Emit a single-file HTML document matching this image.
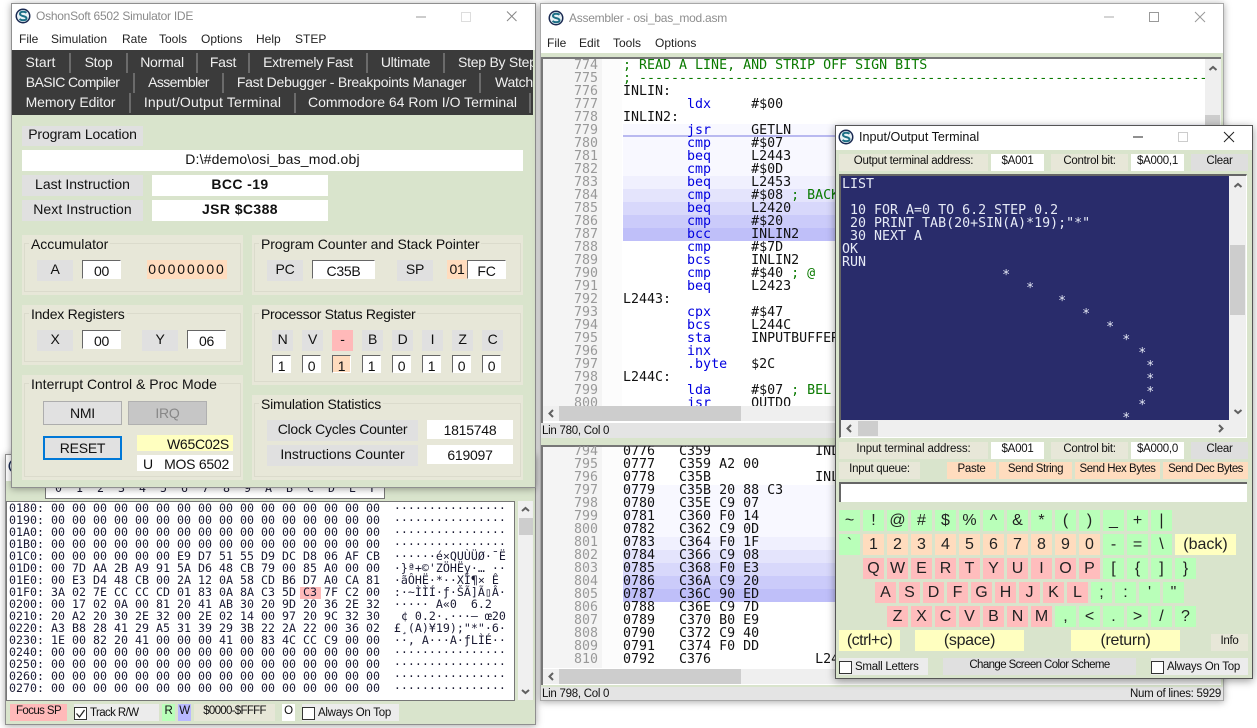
<!DOCTYPE html>
<html><head><meta charset="utf-8"><title>OshonSoft 6502 Simulator IDE</title>
<style>
html,body{margin:0;padding:0;background:#fff;width:1257px;height:728px;overflow:hidden}
body{position:relative;font-family:"Liberation Sans",sans-serif;font-size:14px;letter-spacing:-.25px;color:#111}
div,pre,svg{position:absolute;box-sizing:border-box;margin:0}
.b{display:flex;align-items:center;justify-content:center;white-space:pre;overflow:hidden;padding-bottom:3px}
.t{white-space:pre;line-height:16px}
.w{background:#d9e4cc;box-shadow:0 1px 7px rgba(0,0,0,.35);border:1px solid #8f8f8f}
.g{background:#e0e0e0}.f{background:#fff}.p{background:#ffdcbe}.k{background:#e7e7d8}
.gr{background:#e7e7d8}
.gr i{position:absolute;left:2px;right:2px;top:8px;bottom:3px;border:1px solid #dbdbcc}
.gr b{position:absolute;left:7px;top:0;font-weight:400;line-height:18px;background:#e7e7d8;padding:0 2px;white-space:pre}
.i{background:#fff;border-top:1px solid #666;border-left:1px solid #666;border-right:1px solid #fff;border-bottom:1px solid #fff;padding-top:3px;padding-bottom:0}
.bar{background:#3b3b3b}
.c{top:0;height:20px;color:#f0f0f0;border-right:2px solid #6b6b6b;display:flex;align-items:center;justify-content:center;white-space:pre;overflow:hidden;padding-bottom:2px}
.m{font-family:"DejaVu Sans Mono","Liberation Mono",monospace;font-size:13.3px;line-height:13px;white-space:pre;letter-spacing:0}
.h{font-family:"DejaVu Sans Mono","Liberation Mono",monospace;font-size:11.63px;line-height:12px;white-space:pre;color:#1a1a33;letter-spacing:0}
.n{text-align:right;color:#999}
.in{color:#0000e0}.cm{color:#0a7a00}
.key{width:21px;height:21px;font-size:16px;letter-spacing:0;display:flex;align-items:center;justify-content:center;white-space:pre;color:#222}
.gk{background:#b9ffb9}.pk{background:#ffbdbd}.ok{background:#ffdcbe}.yk{background:#ffffc0}
.s12{font-size:11.5px;letter-spacing:-.27px}
.b.s12{padding-bottom:3px}
.cb{background:#fff;border:1px solid #333;width:13px;height:13px}
.menu{font-size:12px;white-space:pre;color:#222;line-height:14px;letter-spacing:0}
.bold{font-weight:700;letter-spacing:.4px;font-size:14px}
</style></head><body>

<!-- Memory editor window (behind) -->
<div class="w" style="left:5px;top:454px;width:531px;height:271px"></div>
<div style="left:6px;top:455px;width:529px;height:26px;background:#fff"></div>
<svg style="left:8px;top:458px" width="16" height="16" viewBox="0 0 16 16"><circle cx="8" cy="8" r="7.5" fill="#1a2a52"/><circle cx="8" cy="8" r="6" fill="#e8f2f6"/></svg>
<div style="left:45px;top:480px;width:340px;height:19px;background:#fff;border:1px solid #777"></div>
<pre class="h" style="left:55px;top:482px">0  1  2  3  4  5  6  7  8  9  A  B  C  D  E  F</pre>
<div style="left:6px;top:501px;width:509px;height:200px;background:#fff;border:1px solid #777"></div>
<div style="left:299.6px;top:587px;width:21.4px;height:12px;background:#ffb9b9"></div>
<pre class="h" style="left:9px;top:502px">0180: 00 00 00 00 00 00 00 00 00 00 00 00 00 00 00 00  ················
0190: 00 00 00 00 00 00 00 00 00 00 00 00 00 00 00 00  ················
01A0: 00 00 00 00 00 00 00 00 00 00 00 00 00 00 00 00  ················
01B0: 00 00 00 00 00 00 00 00 00 00 00 00 00 00 00 00  ················
01C0: 00 00 00 00 00 00 E9 D7 51 55 D9 DC D8 06 AF CB  ······é×QUÙÜØ·¯Ë
01D0: 00 7D AA 2B A9 91 5A D6 48 CB 79 00 85 A0 00 00  ·}ª+©'ZÖHËy·… ··
01E0: 00 E3 D4 48 CB 00 2A 12 0A 58 CD B6 D7 A0 CA 81  ·ãÔHË·*··XÍ¶× Ê 
01F0: 3A 02 7E CC CC CD 01 83 0A 8A C3 5D C3 7F C2 00  :·~ÌÌÍ·ƒ·ŠÃ]Ã▯Â·
0200: 00 17 02 0A 00 81 20 41 AB 30 20 9D 20 36 2E 32  ····· A«0  6.2
0210: 20 A2 20 30 2E 32 00 2E 02 14 00 97 20 9C 32 30   ¢ 0.2·.···— œ20
0220: A3 B8 28 41 29 A5 31 39 29 3B 22 2A 22 00 36 02  £¸(A)¥19);"*"·6·
0230: 1E 00 82 20 41 00 00 00 41 00 83 4C CC C9 00 00  ··‚ A···A·ƒLÌÉ··
0240: 00 00 00 00 00 00 00 00 00 00 00 00 00 00 00 00  ················
0250: 00 00 00 00 00 00 00 00 00 00 00 00 00 00 00 00  ················
0260: 00 00 00 00 00 00 00 00 00 00 00 00 00 00 00 00  ················
0270: 00 00 00 00 00 00 00 00 00 00 00 00 00 00 00 00  ················</pre>
<div style="left:518px;top:501px;width:15px;height:199px;background:#f0f0f0"></div>
<div style="left:519px;top:518px;width:14px;height:17px;background:#cdcdcd"></div>
<svg style="left:518px;top:501px" width="15" height="199"><polyline points="4,10 7.5,7 11,10" fill="none" stroke="#606060" stroke-width="2"/><polyline points="4,189 7.5,192 11,189" fill="none" stroke="#606060" stroke-width="2"/></svg>
<div class="b s12" style="left:10px;top:704px;width:57px;height:17px;background:#ffb9b9;letter-spacing:-.6px">Focus SP</div>
<div class="s12" style="left:74px;top:704px;width:85px;height:17px;background:#ececec"></div>
<div class="cb" style="left:74px;top:707px"></div>
<svg style="left:74px;top:707px" width="13" height="13"><polyline points="2.5,6.5 5.5,10 10.5,3" fill="none" stroke="#222" stroke-width="1.3"/></svg>
<div class="s12 t" style="left:90px;top:705px;letter-spacing:-.6px">Track R/W</div>
<div class="b s12" style="left:162px;top:704px;width:13px;height:17px;background:#b9ffb9">R</div>
<div class="b s12" style="left:178px;top:704px;width:13px;height:17px;background:#b9b9ff">W</div>
<div class="b s12 k" style="left:194px;top:704px;width:81px;height:17px;letter-spacing:-.7px">$0000-$FFFF</div>
<div class="b s12 f" style="left:282px;top:704px;width:13px;height:17px">O</div>
<div style="left:302px;top:704px;width:97px;height:17px;background:#ececec"></div>
<div class="cb" style="left:302px;top:707px"></div>
<div class="s12 t" style="left:318px;top:705px">Always On Top</div>

<!-- Main simulator window -->
<div class="w" style="left:11px;top:3px;width:525px;height:485px"></div>
<div style="left:12px;top:4px;width:523px;height:46px;background:#fff"></div>
<svg style="left:15px;top:8px" width="16" height="16" viewBox="0 0 16 16"><circle cx="8" cy="8" r="7.5" fill="#1a2a52"/><circle cx="8" cy="8" r="6" fill="#e8f2f6"/><path d="M11.5 4.8C9.5 3 5 3.5 5 6c0 2.6 6.5 1.6 6.5 4.2 0 2.4-4.8 2.6-7 .8" fill="none" stroke="#1c6f86" stroke-width="2"/></svg>
<div class="t" style="left:36px;top:8px;font-size:12px;color:#8a8a8a">OshonSoft 6502 Simulator IDE</div>
<svg style="left:410px;top:8px" width="115" height="18"><line x1="6" y1="9" x2="16" y2="9" stroke="#999"/><rect x="51.5" y="4.5" width="9" height="9" fill="none" stroke="#ddd"/><path d="M97 3.5l9.5 9.5M106.500 3.500l-9.500 9.500" stroke="#888" fill="none"/></svg>
<div class="menu" style="left:19px;top:32px">File</div>
<div class="menu" style="left:51px;top:32px">Simulation</div>
<div class="menu" style="left:122px;top:32px">Rate</div>
<div class="menu" style="left:159px;top:32px">Tools</div>
<div class="menu" style="left:201px;top:32px">Options</div>
<div class="menu" style="left:256px;top:32px">Help</div>
<div class="menu" style="left:295px;top:32px">STEP</div>
<div class="bar" style="left:12px;top:50px;width:521px;height:65px"></div>
<div style="left:12px;top:53px;width:521px;height:20px;overflow:hidden">
<div class="c" style="left:0;width:59px;letter-spacing:.1px">Start</div><div class="c" style="left:59px;width:57px">Stop</div><div class="c" style="left:116px;width:70px">Normal</div><div class="c" style="left:186px;width:52px">Fast</div><div class="c" style="left:238px;width:118px">Extremely Fast</div><div class="c" style="left:356px;width:77px">Ultimate</div><div class="c" style="left:433px;width:100px;border:0;justify-content:flex-start;padding-left:13px">Step By Step</div>
</div>
<div style="left:12px;top:73px;width:521px;height:20px;overflow:hidden">
<div class="c" style="left:0;width:123px;letter-spacing:-.6px">BASIC Compiler</div><div class="c" style="left:123px;width:89px;letter-spacing:-.6px">Assembler</div><div class="c" style="left:212px;width:257px">Fast Debugger - Breakpoints Manager</div><div class="c" style="left:469px;width:60px;border:0;justify-content:flex-start;padding-left:14px">Watch</div>
</div>
<div style="left:12px;top:93px;width:521px;height:20px;overflow:hidden">
<div class="c" style="left:0;width:119px;letter-spacing:-.1px">Memory Editor</div><div class="c" style="left:119px;width:165px;letter-spacing:.18px">Input/Output Terminal</div><div class="c" style="left:284px;width:235px;letter-spacing:0">Commodore 64 Rom I/O Terminal</div>
</div>

<div class="b g" style="left:22px;top:126px;width:121px;height:20px;padding-bottom:4px;letter-spacing:-.12px">Program Location</div>
<div class="b f" style="left:22px;top:150px;width:501px;height:21px;letter-spacing:.17px">D:\#demo\osi_bas_mod.obj</div>
<div class="b g" style="left:22px;top:175px;width:121px;height:21px;letter-spacing:0">Last Instruction</div>
<div class="b f bold" style="left:152px;top:175px;width:176px;height:21px">BCC -19</div>
<div class="b g" style="left:22px;top:200px;width:121px;height:21px;letter-spacing:.08px">Next Instruction</div>
<div class="b f bold" style="left:152px;top:200px;width:176px;height:21px">JSR $C388</div>

<!-- Accumulator -->
<div class="gr" style="left:22px;top:235px;width:221px;height:60px"><i></i><b style="letter-spacing:-.05px">Accumulator</b></div>
<div class="b g" style="left:37px;top:260px;width:36px;height:21px">A</div>
<div class="b i" style="left:82px;top:260px;width:39px;height:19px">00</div>
<div class="b p" style="left:147px;top:260px;width:80px;height:19px;letter-spacing:1.9px;padding-bottom:1px">00000000</div>
<!-- PC SP -->
<div class="gr" style="left:252px;top:235px;width:271px;height:60px"><i></i><b style="letter-spacing:-.1px">Program Counter and Stack Pointer</b></div>
<div class="b g" style="left:267px;top:260px;width:36px;height:21px">PC</div>
<div class="b i" style="left:312px;top:260px;width:63px;height:19px">C35B</div>
<div class="b g" style="left:397px;top:260px;width:36px;height:21px">SP</div>
<div class="b p" style="left:447px;top:260px;width:20px;height:19px;padding-bottom:1px">01</div>
<div class="b i" style="left:467px;top:260px;width:39px;height:19px">FC</div>
<!-- Index -->
<div class="gr" style="left:22px;top:305px;width:221px;height:60px"><i></i><b>Index Registers</b></div>
<div class="b g" style="left:37px;top:330px;width:36px;height:21px">X</div>
<div class="b i" style="left:82px;top:330px;width:39px;height:19px">00</div>
<div class="b g" style="left:142px;top:330px;width:36px;height:21px">Y</div>
<div class="b i" style="left:187px;top:330px;width:39px;height:19px">06</div>
<!-- PSR -->
<div class="gr" style="left:252px;top:305px;width:271px;height:80px"><i></i><b style="letter-spacing:-.33px">Processor Status Register</b></div>
<div class="b g" style="left:272px;top:330px;width:21px;height:21px">N</div>
<div class="b g" style="left:302px;top:330px;width:21px;height:21px">V</div>
<div class="b" style="left:332px;top:330px;width:21px;height:21px;background:#ffb9b9">-</div>
<div class="b g" style="left:362px;top:330px;width:21px;height:21px">B</div>
<div class="b g" style="left:392px;top:330px;width:21px;height:21px">D</div>
<div class="b g" style="left:422px;top:330px;width:21px;height:21px">I</div>
<div class="b g" style="left:452px;top:330px;width:21px;height:21px">Z</div>
<div class="b g" style="left:482px;top:330px;width:21px;height:21px">C</div>
<div class="b i" style="left:272px;top:355px;width:19px;height:18px;padding-top:4px">1</div>
<div class="b i" style="left:302px;top:355px;width:19px;height:18px;padding-top:4px">0</div>
<div class="b i" style="left:332px;top:355px;width:19px;height:18px;padding-top:4px;background:#ffdcbe">1</div>
<div class="b i" style="left:362px;top:355px;width:19px;height:18px;padding-top:4px">1</div>
<div class="b i" style="left:392px;top:355px;width:19px;height:18px;padding-top:4px">0</div>
<div class="b i" style="left:422px;top:355px;width:19px;height:18px;padding-top:4px">1</div>
<div class="b i" style="left:452px;top:355px;width:19px;height:18px;padding-top:4px">0</div>
<div class="b i" style="left:482px;top:355px;width:19px;height:18px;padding-top:4px">0</div>
<!-- Interrupt -->
<div class="gr" style="left:22px;top:375px;width:221px;height:105px"><i></i><b style="letter-spacing:0">Interrupt Control &amp; Proc Mode</b></div>
<div class="b" style="left:43px;top:401px;width:79px;height:24px;background:#e1e1e1;border:1px solid #adadad;padding:0">NMI</div>
<div class="b" style="left:128px;top:401px;width:79px;height:24px;background:#c6c6c6;border:1px solid #b0b0b0;color:#888;padding:0">IRQ</div>
<div class="b" style="left:43px;top:436px;width:79px;height:24px;background:#e1e1e1;border:2px solid #0078d7;padding:0">RESET</div>
<div class="b" style="left:137px;top:435px;width:96px;height:16px;background:#ffffc0;justify-content:flex-end;padding:2px 4px 0 0">W65C02S</div>
<div class="b f" style="left:137px;top:455px;width:96px;height:16px;justify-content:flex-end;padding:2px 4px 0 0"><span style="position:absolute;left:6px">U</span>MOS 6502</div>
<!-- Sim stats -->
<div class="gr" style="left:252px;top:395px;width:271px;height:85px"><i></i><b>Simulation Statistics</b></div>
<div class="b g" style="left:267px;top:420px;width:151px;height:21px">Clock Cycles Counter</div>
<div class="b f" style="left:427px;top:420px;width:86px;height:19px;padding:0">1815748</div>
<div class="b g" style="left:267px;top:445px;width:151px;height:21px;letter-spacing:-.05px">Instructions Counter</div>
<div class="b f" style="left:427px;top:445px;width:86px;height:19px;padding:0">619097</div>

<!-- Assembler window -->
<div class="w" style="left:540px;top:3px;width:684px;height:698px;background:#d9e4cc;border-color:#a8a8a8"></div>
<div style="left:541px;top:4px;width:682px;height:49px;background:#fff"></div>
<svg style="left:548px;top:10px" width="16" height="16" viewBox="0 0 16 16"><circle cx="8" cy="8" r="7.5" fill="#1a2a52"/><circle cx="8" cy="8" r="6" fill="#e8f2f6"/><path d="M11.5 4.8C9.500 3 5 3.500 5 6c0 2.600 6.500 1.600 6.500 4.200 0 2.400-4.800 2.600-7 .8" fill="none" stroke="#1c6f86" stroke-width="2"/></svg>
<div class="t" style="left:569px;top:10px;font-size:12px;color:#8e8e8e">Assembler - osi_bas_mod.asm</div>
<svg style="left:1100px;top:8px" width="115" height="18"><line x1="4" y1="9" x2="14" y2="9" stroke="#aaa"/><rect x="49.500" y="4.500" width="9" height="9" fill="none" stroke="#999"/><path d="M95 4l10 10M105 4l-10 10" stroke="#999" fill="none"/></svg>
<div class="menu" style="left:547px;top:36px">File</div>
<div class="menu" style="left:579px;top:36px">Edit</div>
<div class="menu" style="left:613px;top:36px">Tools</div>
<div class="menu" style="left:655px;top:36px">Options</div>

<!-- editor 1 -->
<div style="left:541px;top:57px;width:680px;height:366px;background:#fff;border-top:2px solid #777;border-left:2px solid #777;overflow:hidden"></div>
<div style="left:543px;top:59px;width:59px;height:347px;background:#f4f4f4"></div>
<div style="left:602px;top:59px;width:20px;height:347px;background:#fcfcfc"></div>
<div style="left:622.5px;top:124px;width:583px;height:13px;background:#f8f8ff;border-bottom:2px solid #b9b9f0"></div>
<div style="left:622.500px;top:137px;width:583px;height:39px;background:#f8f8ff"></div>
<div style="left:622.500px;top:176px;width:583px;height:13px;background:#f0f0fe"></div>
<div style="left:622.500px;top:189px;width:583px;height:13px;background:#e4e4fc"></div>
<div style="left:622.500px;top:202px;width:583px;height:13px;background:#d8d8fb"></div>
<div style="left:622.500px;top:215px;width:583px;height:13px;background:#cbcbfa"></div>
<div style="left:622.500px;top:228px;width:583px;height:13px;background:#bfbff9"></div>
<div style="left:543px;top:59px;width:662px;height:347px;overflow:hidden">
<pre class="m n" style="left:0;top:0;width:55px">774
775
776
777
778
779
780
781
782
783
784
785
786
787
788
789
790
791
792
793
794
795
796
797
798
799
800</pre>
<pre class="m" style="left:80px;top:0"><span class="cm">; READ A LINE, AND STRIP OFF SIGN BITS
; -----------------------------------------------------------------------</span>
INLIN:
        <span class="in">ldx</span>     #$00
INLIN2:
        <span class="in">jsr</span>     GETLN
        <span class="in">cmp</span>     #$07
        <span class="in">beq</span>     L2443
        <span class="in">cmp</span>     #$0D
        <span class="in">beq</span>     L2453
        <span class="in">cmp</span>     #$08 <span class="cm">; BACKSPACE</span>
        <span class="in">beq</span>     L2420
        <span class="in">cmp</span>     #$20
        <span class="in">bcc</span>     INLIN2
        <span class="in">cmp</span>     #$7D
        <span class="in">bcs</span>     INLIN2
        <span class="in">cmp</span>     #$40 <span class="cm">; @</span>
        <span class="in">beq</span>     L2423
L2443:
        <span class="in">cpx</span>     #$47
        <span class="in">bcs</span>     L244C
        <span class="in">sta</span>     INPUTBUFFER,X
        <span class="in">inx</span>
        <span class="in">.byte</span>   $2C
L244C:
        <span class="in">lda</span>     #$07 <span class="cm">; BEL</span>
        <span class="in">jsr</span>     OUTDO</pre>
</div>
<div style="left:1205px;top:59px;width:16px;height:347px;background:#efefef"></div>
<div style="left:1205px;top:115px;width:15px;height:60px;background:#cdcdcd"></div>
<svg style="left:1205px;top:59px" width="16" height="20"><polyline points="4.500,11 8,8 11.500,11" fill="none" stroke="#606060" stroke-width="2"/></svg>
<div style="left:543px;top:406px;width:678px;height:15px;background:#efefef"></div>
<div style="left:559px;top:406px;width:182px;height:15px;background:#cdcdcd"></div>
<svg style="left:543px;top:406px" width="16" height="15"><polyline points="10,4 6.500,7.500 10,11" fill="none" stroke="#606060" stroke-width="2"/></svg>
<div style="left:541px;top:423px;width:682px;height:15px;background:#e4e4e4"></div>
<div class="s12 t" style="left:542px;top:423px">Lin 780, Col 0</div>

<!-- editor 2 -->
<div style="left:541px;top:445px;width:680px;height:240px;background:#fff;border-top:2px solid #777;border-left:2px solid #777"></div>
<div style="left:543px;top:447px;width:59px;height:221px;background:#f4f4f4"></div>
<div style="left:602px;top:447px;width:20px;height:221px;background:#fcfcfc"></div>
<div style="left:622.500px;top:485px;width:598px;height:52px;background:#f8f8ff"></div>
<div style="left:622.500px;top:537px;width:598px;height:13px;background:#f0f0fe"></div>
<div style="left:622.500px;top:550px;width:598px;height:13px;background:#e4e4fc"></div>
<div style="left:622.500px;top:563px;width:598px;height:13px;background:#d8d8fb"></div>
<div style="left:622.500px;top:576px;width:598px;height:13px;background:#cbcbfa"></div>
<div style="left:622.500px;top:589px;width:598px;height:13px;background:#bfbff9"></div>
<div style="left:543px;top:446px;width:678px;height:222px;overflow:hidden">
<pre class="m n" style="left:0;top:-1px;width:55px">794
795
796
797
798
799
800
801
802
803
804
805
806
807
808
809
810</pre>
<pre class="m" style="left:80px;top:-1px">0776   C359             INLIN:
0777   C359 A2 00
0778   C35B             INLIN2:
0779   C35B 20 88 C3
0780   C35E C9 07
0781   C360 F0 14
0782   C362 C9 0D
0783   C364 F0 1F
0784   C366 C9 08
0785   C368 F0 E3
0786   C36A C9 20
0787   C36C 90 ED
0788   C36E C9 7D
0789   C370 B0 E9
0790   C372 C9 40
0791   C374 F0 DD
0792   C376             L2443:</pre>
</div>
<div style="left:543px;top:669px;width:678px;height:15px;background:#efefef"></div>
<div style="left:559px;top:669px;width:182px;height:15px;background:#cdcdcd"></div>
<svg style="left:543px;top:669px" width="16" height="15"><polyline points="10,4 6.500,7.500 10,11" fill="none" stroke="#606060" stroke-width="2"/></svg>
<div style="left:541px;top:687px;width:682px;height:13px;background:#e4e4e4"></div>
<div class="s12 t" style="left:542px;top:686px">Lin 798, Col 0</div>
<div class="s12 t" style="left:1130px;top:686px">Num of lines: 5929</div>

<!-- Terminal window -->
<div class="w" style="left:835px;top:125px;width:418px;height:554px;border-color:#555;box-shadow:0 2px 8px rgba(0,0,0,.4)"></div>
<div style="left:836px;top:126px;width:416px;height:24px;background:#fff"></div>
<svg style="left:838px;top:129px" width="16" height="16" viewBox="0 0 16 16"><circle cx="8" cy="8" r="7.500" fill="#1a2a52"/><circle cx="8" cy="8" r="6" fill="#e8f2f6"/><path d="M11.500 4.800C9.500 3 5 3.500 5 6c0 2.600 6.500 1.600 6.500 4.200 0 2.400-4.800 2.600-7 .8" fill="none" stroke="#1c6f86" stroke-width="2"/></svg>
<div class="t" style="left:859px;top:129px;font-size:12.600px;letter-spacing:0;color:#111">Input/Output Terminal</div>
<svg style="left:1130px;top:128px" width="110" height="18"><line x1="3" y1="9" x2="13" y2="9" stroke="#222"/><rect x="48.500" y="4.500" width="9" height="9" fill="none" stroke="#ccc"/><path d="M94 4l10 10M104 4l-10 10" stroke="#222" fill="none"/></svg>

<div class="b s12 k" style="left:839px;top:154px;width:149px;height:17px">Output terminal address:</div>
<div class="b s12 f" style="left:991px;top:154px;width:53px;height:17px">$A001</div>
<div class="b s12 k" style="left:1051px;top:154px;width:77px;height:17px">Control bit:</div>
<div class="b s12 f" style="left:1131px;top:154px;width:53px;height:17px">$A000,1</div>
<div class="b s12" style="left:1191px;top:154px;width:57px;height:17px;background:#dedede">Clear</div>

<div style="left:839px;top:174px;width:408px;height:264px;background:#efefef;border-top:2px solid #666;border-left:2px solid #666;border-right:1px solid #fff;border-bottom:1px solid #fff"></div>
<div style="left:841px;top:176px;width:388px;height:244px;background:#292c6b;overflow:hidden">
<pre class="m" style="left:1px;top:2px;color:#e6eaf6">LIST

 10 FOR A=0 TO 6.2 STEP 0.2
 20 PRINT TAB(20+SIN(A)*19);"*"
 30 NEXT A
OK
RUN
                    *
                       *
                           *
                              *
                                 *
                                   *
                                     *
                                      *
                                      *
                                      *
                                     *
                                   *</pre>
</div>
<div style="left:1230px;top:245px;width:15px;height:70px;background:#cdcdcd"></div>
<svg style="left:1229px;top:176px" width="18" height="244"><polyline points="5.500,11 9,8 12.500,11" fill="none" stroke="#606060" stroke-width="2"/><polyline points="5.500,234 9,237 12.500,234" fill="none" stroke="#606060" stroke-width="2"/></svg>
<div style="left:858px;top:421px;width:20px;height:15px;background:#cdcdcd"></div>
<svg style="left:841px;top:421px" width="388" height="15"><polyline points="10,4 6.500,7.500 10,11" fill="none" stroke="#606060" stroke-width="2"/><polyline points="378,4 381.500,7.500 378,11" fill="none" stroke="#606060" stroke-width="2"/></svg>

<div class="b s12 k" style="left:839px;top:442px;width:149px;height:17px;letter-spacing:-.12px">Input terminal address:</div>
<div class="b s12 f" style="left:991px;top:442px;width:53px;height:17px">$A001</div>
<div class="b s12 k" style="left:1051px;top:442px;width:77px;height:17px">Control bit:</div>
<div class="b s12 f" style="left:1131px;top:442px;width:53px;height:17px">$A000,0</div>
<div class="b s12" style="left:1191px;top:442px;width:57px;height:17px;background:#dedede">Clear</div>
<div class="b s12 k" style="left:839px;top:462px;width:81px;height:17px">Input queue:</div>
<div class="b s12 p" style="left:947px;top:462px;width:49px;height:17px">Paste</div>
<div class="b s12 p" style="left:999px;top:462px;width:73px;height:17px;letter-spacing:-.45px">Send String</div>
<div class="b s12 p" style="left:1075px;top:462px;width:85px;height:17px;letter-spacing:-.47px">Send Hex Bytes</div>
<div class="b s12 p" style="left:1163px;top:462px;width:85px;height:17px;letter-spacing:-.55px">Send Dec Bytes</div>
<div style="left:839px;top:482px;width:408px;height:20px;background:#fff;border-top:2px solid #666;border-left:2px solid #666"></div>

<!-- Keyboard -->
<div class="key gk" style="left:839px;top:510px">~</div><div class="key gk" style="left:863px;top:510px">!</div><div class="key gk" style="left:887px;top:510px">@</div><div class="key gk" style="left:911px;top:510px">#</div><div class="key gk" style="left:935px;top:510px">$</div><div class="key gk" style="left:959px;top:510px">%</div><div class="key gk" style="left:983px;top:510px">^</div><div class="key gk" style="left:1007px;top:510px">&amp;</div><div class="key gk" style="left:1031px;top:510px">*</div><div class="key gk" style="left:1055px;top:510px">(</div><div class="key gk" style="left:1079px;top:510px">)</div><div class="key gk" style="left:1103px;top:510px">_</div><div class="key gk" style="left:1127px;top:510px">+</div><div class="key gk" style="left:1151px;top:510px">|</div>
<div class="key gk" style="left:839px;top:534px">`</div><div class="key ok" style="left:863px;top:534px">1</div><div class="key ok" style="left:887px;top:534px">2</div><div class="key ok" style="left:911px;top:534px">3</div><div class="key ok" style="left:935px;top:534px">4</div><div class="key ok" style="left:959px;top:534px">5</div><div class="key ok" style="left:983px;top:534px">6</div><div class="key ok" style="left:1007px;top:534px">7</div><div class="key ok" style="left:1031px;top:534px">8</div><div class="key ok" style="left:1055px;top:534px">9</div><div class="key ok" style="left:1079px;top:534px">0</div><div class="key gk" style="left:1103px;top:534px">-</div><div class="key gk" style="left:1127px;top:534px">=</div><div class="key gk" style="left:1151px;top:534px">\</div><div class="key yk" style="left:1175px;top:534px;width:61px">(back)</div>
<div class="key pk" style="left:863px;top:558px">Q</div><div class="key pk" style="left:887px;top:558px">W</div><div class="key pk" style="left:911px;top:558px">E</div><div class="key pk" style="left:935px;top:558px">R</div><div class="key pk" style="left:959px;top:558px">T</div><div class="key pk" style="left:983px;top:558px">Y</div><div class="key pk" style="left:1007px;top:558px">U</div><div class="key pk" style="left:1031px;top:558px">I</div><div class="key pk" style="left:1055px;top:558px">O</div><div class="key pk" style="left:1079px;top:558px">P</div><div class="key gk" style="left:1103px;top:558px">[</div><div class="key gk" style="left:1127px;top:558px">{</div><div class="key gk" style="left:1151px;top:558px">]</div><div class="key gk" style="left:1175px;top:558px">}</div>
<div class="key pk" style="left:875px;top:582px">A</div><div class="key pk" style="left:899px;top:582px">S</div><div class="key pk" style="left:923px;top:582px">D</div><div class="key pk" style="left:947px;top:582px">F</div><div class="key pk" style="left:971px;top:582px">G</div><div class="key pk" style="left:995px;top:582px">H</div><div class="key pk" style="left:1019px;top:582px">J</div><div class="key pk" style="left:1043px;top:582px">K</div><div class="key pk" style="left:1067px;top:582px">L</div><div class="key gk" style="left:1091px;top:582px">;</div><div class="key gk" style="left:1115px;top:582px">:</div><div class="key gk" style="left:1139px;top:582px">'</div><div class="key gk" style="left:1163px;top:582px">"</div>
<div class="key pk" style="left:887px;top:606px">Z</div><div class="key pk" style="left:911px;top:606px">X</div><div class="key pk" style="left:935px;top:606px">C</div><div class="key pk" style="left:959px;top:606px">V</div><div class="key pk" style="left:983px;top:606px">B</div><div class="key pk" style="left:1007px;top:606px">N</div><div class="key pk" style="left:1031px;top:606px">M</div><div class="key gk" style="left:1055px;top:606px">,</div><div class="key gk" style="left:1079px;top:606px">&lt;</div><div class="key gk" style="left:1103px;top:606px">.</div><div class="key gk" style="left:1127px;top:606px">&gt;</div><div class="key gk" style="left:1151px;top:606px">/</div><div class="key gk" style="left:1175px;top:606px">?</div>
<div class="key yk" style="left:839px;top:630px;width:61px;letter-spacing:-.5px">(ctrl+c)</div>
<div class="key yk" style="left:915px;top:630px;width:109px;letter-spacing:-.3px">(space)</div>
<div class="key yk" style="left:1071px;top:630px;width:109px;letter-spacing:-.3px">(return)</div>
<div class="b s12 k" style="left:1211px;top:634px;width:37px;height:17px">Info</div>
<div style="left:839px;top:658px;width:89px;height:17px;background:#ececec"></div>
<div class="cb" style="left:839px;top:661px"></div>
<div class="s12 t" style="left:855px;top:659px">Small Letters</div>
<div class="b s12" style="left:943px;top:658px;width:193px;height:17px;background:#e0e0e0;letter-spacing:-.6px">Change Screen Color Scheme</div>
<div style="left:1151px;top:658px;width:97px;height:17px;background:#ececec"></div>
<div class="cb" style="left:1151px;top:661px"></div>
<div class="s12 t" style="left:1167px;top:659px">Always On Top</div>
</body></html>
